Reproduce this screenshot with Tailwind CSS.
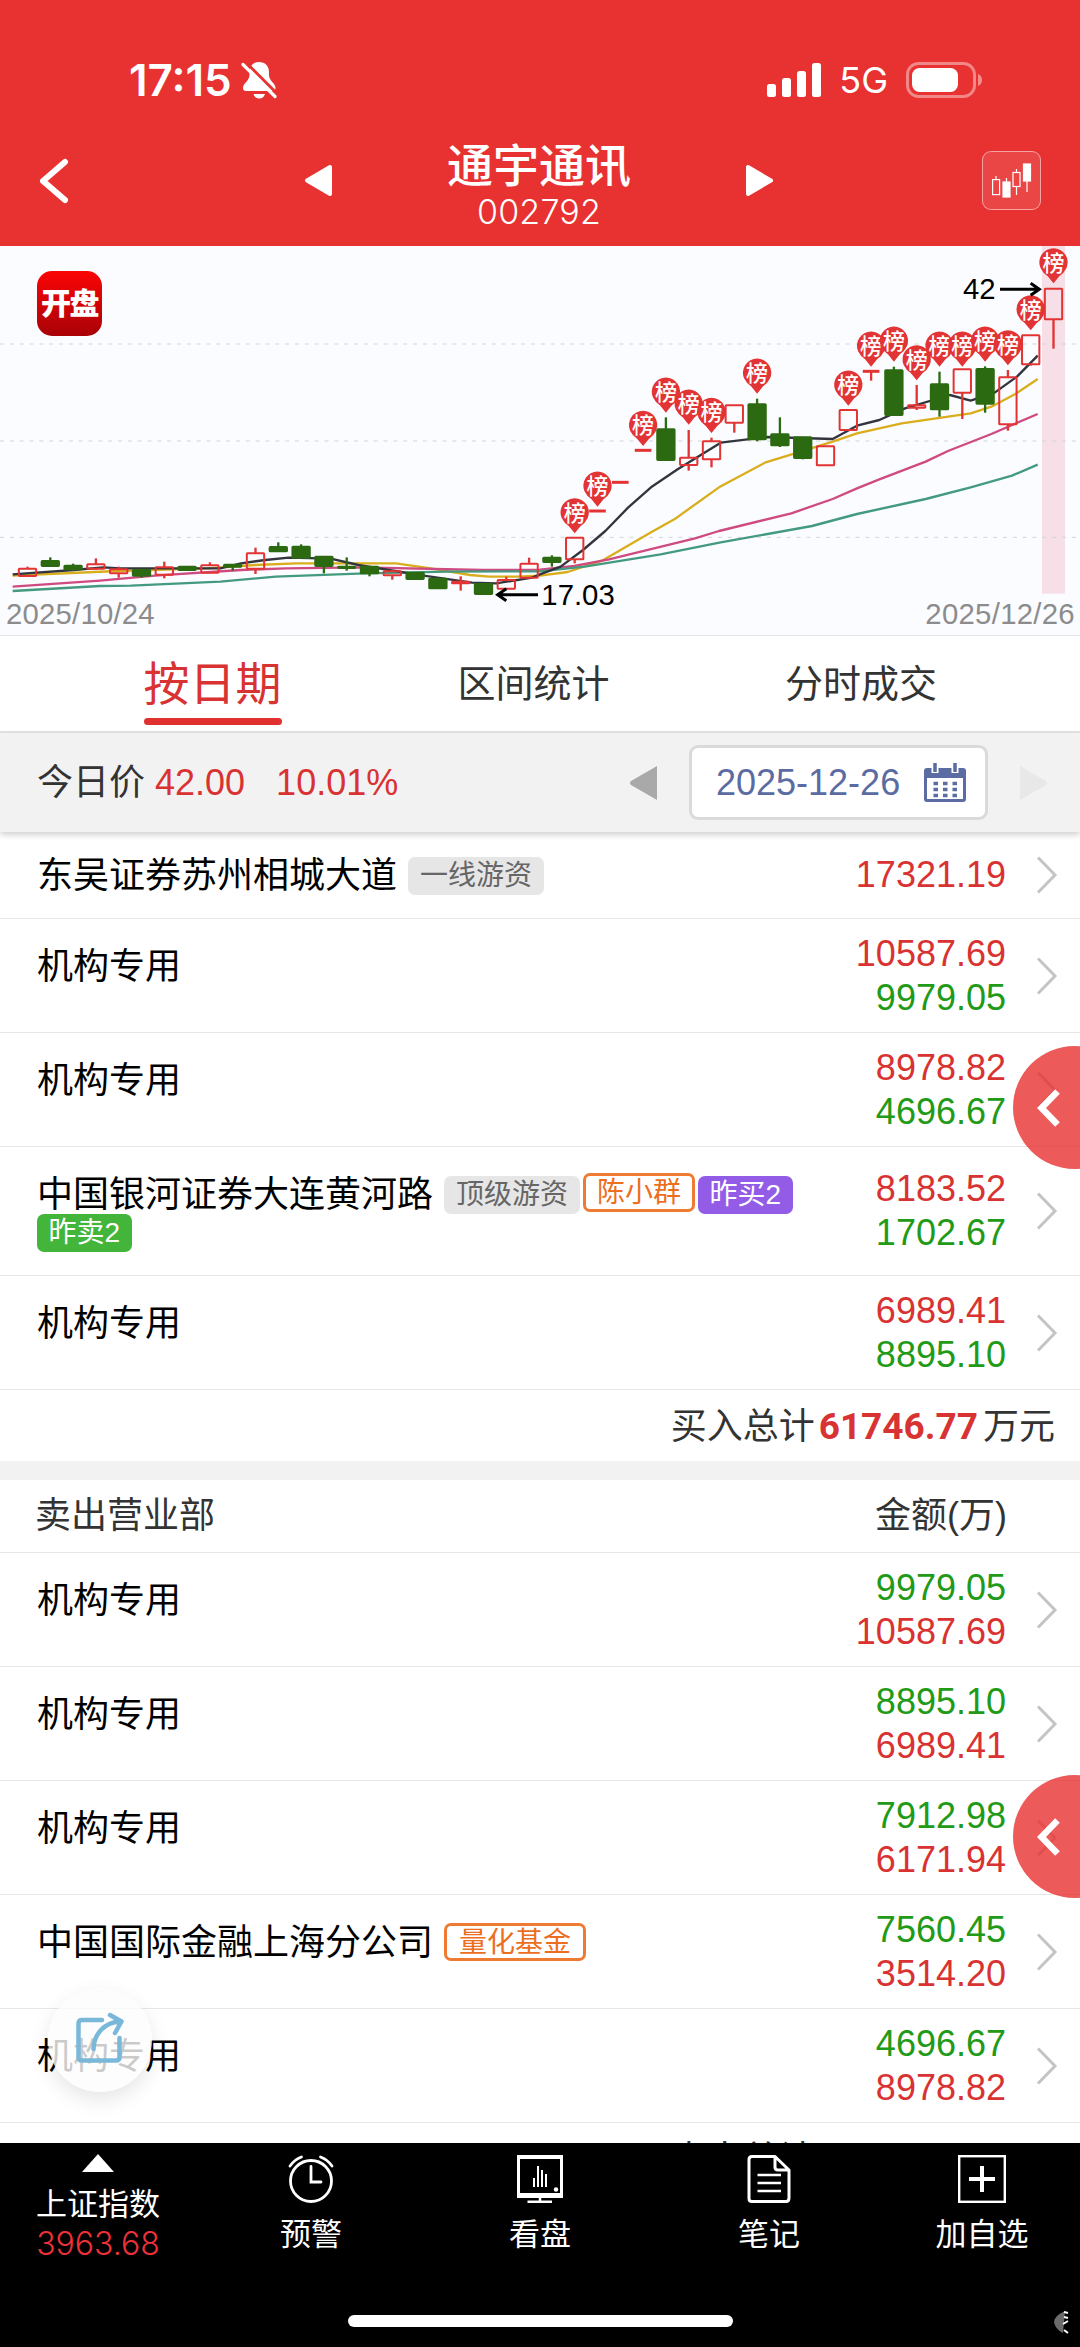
<!DOCTYPE html>
<html lang="zh-CN">
<head>
<meta charset="utf-8">
<title>通宇通讯 002792</title>
<script src="https://cdn.jsdelivr.net/npm/@tailwindcss/browser@4"></script>
</head>
<body class="bg-white">
<svg class="hidden">
  <symbol id="next" viewBox="0 0 22 38"><path d="M2 1.500 L19 19 L2 36.500" fill="none" stroke="#c4c4c4" stroke-width="3"/></symbol>
</svg>
<div class="relative flex h-[2347px] w-[1080px] flex-col overflow-hidden bg-white font-['Liberation_Sans','Noto_Sans_CJK_SC',sans-serif] text-[36px] leading-[44px] text-black">

  <!-- Status bar and title -->
  <header class="flex h-[246px] shrink-0 flex-col bg-[#e83131] text-white">
    <div class="flex h-[130px] items-start justify-between pt-[56px] pr-[97px] pl-[129px]">
      <div class="flex items-center gap-[9px]">
        <span class="font-['Inter',sans-serif] text-[44px] font-semibold leading-[48px]">17:15</span>
        <svg class="h-[38px] w-[36px]" viewBox="0 0 36 38">
          <path d="M18 1 C12 1 8.500 5 8.500 11 V14 C8.500 20 2 22 2 27 C2 29 3 30 5 30 H31 C33 30 34.500 29 34.500 27 C34.500 22 28 20 28 14 V11 C28 5 24 1 18 1Z M12.500 33 H24 C23 36 21 37.500 18.200 37.500 C15.500 37.500 13.500 36 12.500 33Z" fill="#fff"/>
          <path d="M4.500 1 L37 33.500" stroke="#e83131" stroke-width="3"/>
          <path d="M2 3.500 L34 35.500" stroke="#fff" stroke-width="3.200" stroke-linecap="round"/>
        </svg>
      </div>
      <div class="flex items-center gap-[18px] pt-[5px]">
        <svg class="h-[34px] w-[54px]" viewBox="0 0 54 34" fill="#fff"><rect x="0" y="21" width="9" height="13" rx="2.500"/><rect x="15" y="15" width="9" height="19" rx="2.500"/><rect x="30" y="8" width="9" height="26" rx="2.500"/><rect x="45" y="0" width="9" height="34" rx="2.500"/></svg>
        <span class="font-['Inter',sans-serif] text-[36px] leading-[38px]">5G</span>
        <svg class="h-[36px] w-[77px]" viewBox="0 0 77 36"><rect x="1.500" y="1.500" width="67" height="33" rx="11" fill="none" stroke="#fff" stroke-opacity=".42" stroke-width="3"/><rect x="6" y="6" width="46" height="24" rx="7.500" fill="#fff"/><path d="M72 12 C77.500 14 77.500 22 72 24Z" fill="#fff" fill-opacity=".45"/></svg>
      </div>
    </div>
    <div class="grid h-[98px] grid-cols-[1fr_470px_1fr] items-center pr-[39px] pl-[37px]">
      <svg class="h-[46px] w-[32px]" viewBox="0 0 32 46"><path d="M28 4 L6 23 L28 42" fill="none" stroke="#fff" stroke-width="6" stroke-linecap="round" stroke-linejoin="round"/></svg>
      <div class="flex items-center justify-between">
        <svg class="h-[33px] w-[28px]" viewBox="0 0 28 33"><path d="M26 3 V30 L3 16.500Z" fill="#fff" stroke="#fff" stroke-width="4" stroke-linejoin="round"/></svg>
        <div class="flex flex-col items-center pt-[9px]">
          <h1 class="text-[46px] font-medium leading-[54px]">通宇通讯</h1>
          <span class="font-['Inter',sans-serif] text-[34px] font-light leading-[38px] tracking-[0.2px]">002792</span>
        </div>
        <svg class="h-[33px] w-[28px]" viewBox="0 0 28 33"><path d="M2 3 V30 L25 16.500Z" fill="#fff" stroke="#fff" stroke-width="4" stroke-linejoin="round"/></svg>
      </div>
      <div class="size-[59px] justify-self-end rounded-[9px] border border-white/50 bg-white/10">
        <svg class="size-[57px]" viewBox="1 1 57 57" fill="none" stroke="#fff" stroke-width="1.200"><path d="M14 25 V28 M34.500 18 V21 M34.500 36 V44 M45 30 V41 M24.500 27 V31"/><rect x="10.600" y="28.600" width="7" height="15"/><rect x="21" y="31" width="7" height="15" fill="#fff"/><rect x="31" y="21.500" width="7" height="14"/><rect x="41.500" y="13" width="7" height="17" fill="#fff"/></svg>
      </div>
    </div>
  </header>

  <!-- Candlestick chart -->
  <section class="relative h-[390px] shrink-0 border-b border-[#e2e4e6] bg-[#fbfcff]">
    <svg id="chart" class="block h-[390px] w-[1080px]" viewBox="0 18 3240 1170"></svg>
    <div class="absolute top-[25px] left-[37px] flex size-[65px] items-center justify-center rounded-[15px] bg-linear-to-b from-[#fb0505] to-[#a90207] text-[30px] font-black leading-[64px] tracking-[-1.5px] text-white">开盘</div>
  </section>

  <!-- Tabs -->
  <nav class="flex h-[97px] shrink-0 border-b-2 border-[#e4e4e4] text-[38px] text-[#333]">
    <div class="flex w-[425px] flex-col items-center pt-[18px]">
      <span class="text-[46px] leading-[60px] text-[#d93232]">按日期</span>
      <i class="mt-[4px] h-[7px] w-[138px] rounded-full bg-[#e03030]"></i>
    </div>
    <div class="flex w-[217px] items-center justify-center">区间统计</div>
    <div class="flex w-[438px] items-center justify-center">分时成交</div>
  </nav>

  <!-- Price and date picker -->
  <section class="z-10 flex h-[99px] shrink-0 items-center bg-[#f2f2f2] pl-[37px] shadow-[0_3px_6px_rgba(0,0,0,0.18)]">
    <span class="pt-[1px] text-[#333]">今日价</span>
    <span class="pt-[1px] pl-[10px] text-[#d93232]">42.00</span>
    <span class="pt-[1px] pl-[31px] text-[#d93232]">10.01%</span>
    <svg class="ml-auto h-[34px] w-[28px]" viewBox="0 0 28 34"><path d="M28 0 V34 L2 19 Q0 17 2 15Z" fill="#a9a9a9"/></svg>
    <div class="mx-[32px] flex h-[75px] w-[299px] items-center justify-between rounded-[9px] border-[3px] border-[#dadada] bg-white pr-[18px] pl-[24px] text-[#5a6ca2]">
      <span>2025-12-26</span>
      <svg class="h-[40px] w-[44px]" viewBox="0 0 44 40">
        <path d="M4 5 H40 Q43 5 43 8 V36 Q43 39 40 39 H4 Q1 39 1 36 V8 Q1 5 4 5Z" fill="#5a6ca2"/>
        <path d="M4 15 H40 V36 H4Z" fill="#fff"/>
        <path d="M12 0 V10 M32 0 V10" stroke="#fff" stroke-width="7"/>
        <path d="M12 0 V9 M32 0 V9" stroke="#5a6ca2" stroke-width="3.500"/>
        <path d="M10.500 20.500 H34 M10.500 26.500 H34 M10.500 32.500 H34" stroke="#5a6ca2" stroke-width="3.600" stroke-dasharray="4.500 5"/>
      </svg>
    </div>
    <svg class="mr-[32px] h-[34px] w-[28px]" viewBox="0 0 28 34"><path d="M0 0 V34 L26 19 Q28 17 26 15Z" fill="#e8e8e8"/></svg>
  </section>

  <!-- Buy side -->
  <div class="flex h-[87px] shrink-0 items-center border-b border-[#e6e6e6] pr-[22px] pl-[37px]">
    <span class="pt-[2px]">东吴证券苏州相城大道</span>
    <span class="mt-[2px] ml-[11px] h-[38px] rounded-[7px] bg-[#e6e6e6] px-[12px] text-[28px] leading-[38px] text-[#666]">一线游资</span>
    <span class="-mt-[1px] ml-auto text-[#d93232]">17321.19</span>
    <svg class="ml-[30px] h-[38px] w-[22px]"><use href="#next"/></svg>
  </div>
  <div class="flex h-[114px] shrink-0 items-center border-b border-[#e6e6e6] pr-[22px] pl-[37px]">
    <span class="-mt-[18px] flex-1">机构专用</span>
    <div class="flex flex-col text-right"><span class="text-[#d93232]">10587.69</span><span class="text-[#219a18]">9979.05</span></div>
    <svg class="ml-[30px] h-[38px] w-[22px]"><use href="#next"/></svg>
  </div>
  <div class="flex h-[114px] shrink-0 items-center border-b border-[#e6e6e6] pr-[22px] pl-[37px]">
    <span class="-mt-[18px] flex-1">机构专用</span>
    <div class="flex flex-col text-right"><span class="text-[#d93232]">8978.82</span><span class="text-[#219a18]">4696.67</span></div>
    <svg class="ml-[30px] h-[38px] w-[22px]"><use href="#next"/></svg>
  </div>
  <div class="flex h-[129px] shrink-0 items-center border-b border-[#e6e6e6] pr-[22px] pl-[37px]">
    <div class="flex w-[780px] flex-wrap items-center pt-[5px]">
      <span class="leading-[38px]">中国银河证券大连黄河路</span>
      <span class="ml-[11px] h-[38px] rounded-[7px] bg-[#e6e6e6] px-[12px] text-[28px] leading-[38px] text-[#666]">顶级游资</span>
      <span class="-mt-[5px] ml-[3px] h-[39px] rounded-[7px] border-[3px] border-[#ef7a32] px-[11px] text-[28px] leading-[34px] text-[#ec6f1f]">陈小群</span>
      <span class="ml-[3px] h-[38px] rounded-[7px] bg-[#935ce6] px-[11.500px] text-[28px] leading-[38px] text-white">昨买2</span>
      <span class="h-[38px] rounded-[7px] bg-[#43b53a] px-[11.500px] text-[28px] leading-[38px] text-white">昨卖2</span>
    </div>
    <div class="ml-auto flex flex-col text-right"><span class="text-[#d93232]">8183.52</span><span class="text-[#219a18]">1702.67</span></div>
    <svg class="ml-[30px] h-[38px] w-[22px]"><use href="#next"/></svg>
  </div>
  <div class="flex h-[114px] shrink-0 items-center border-b border-[#e6e6e6] pr-[22px] pl-[37px]">
    <span class="-mt-[18px] flex-1">机构专用</span>
    <div class="flex flex-col text-right"><span class="text-[#d93232]">6989.41</span><span class="text-[#219a18]">8895.10</span></div>
    <svg class="ml-[30px] h-[38px] w-[22px]"><use href="#next"/></svg>
  </div>
  <div class="flex h-[71px] shrink-0 items-center justify-end pt-[2px] pr-[25px] text-[#333]">
    <span>买入总计</span><b class="mr-[5px] ml-[4px] font-['Roboto',sans-serif] text-[37px] font-bold text-[#d93232]">61746.77</b><span>万元</span>
  </div>
  <div class="h-[19px] shrink-0 bg-[#f2f2f2]"></div>

  <!-- Sell side -->
  <div class="flex h-[73px] shrink-0 items-center justify-between border-b border-[#e6e6e6] pr-[73px] pl-[35px] text-[#333]"><span>卖出营业部</span><span>金额(万)</span></div>
  <div class="flex h-[114px] shrink-0 items-center border-b border-[#e6e6e6] pr-[22px] pl-[37px]">
    <span class="-mt-[18px] flex-1">机构专用</span>
    <div class="flex flex-col text-right"><span class="text-[#219a18]">9979.05</span><span class="text-[#d93232]">10587.69</span></div>
    <svg class="ml-[30px] h-[38px] w-[22px]"><use href="#next"/></svg>
  </div>
  <div class="flex h-[114px] shrink-0 items-center border-b border-[#e6e6e6] pr-[22px] pl-[37px]">
    <span class="-mt-[18px] flex-1">机构专用</span>
    <div class="flex flex-col text-right"><span class="text-[#219a18]">8895.10</span><span class="text-[#d93232]">6989.41</span></div>
    <svg class="ml-[30px] h-[38px] w-[22px]"><use href="#next"/></svg>
  </div>
  <div class="flex h-[114px] shrink-0 items-center border-b border-[#e6e6e6] pr-[22px] pl-[37px]">
    <span class="-mt-[18px] flex-1">机构专用</span>
    <div class="flex flex-col text-right"><span class="text-[#219a18]">7912.98</span><span class="text-[#d93232]">6171.94</span></div>
    <svg class="ml-[30px] h-[38px] w-[22px]"><use href="#next"/></svg>
  </div>
  <div class="flex h-[114px] shrink-0 items-center border-b border-[#e6e6e6] pr-[22px] pl-[37px]">
    <div class="-mt-[18px] flex flex-1 items-center">
      <span>中国国际金融上海分公司</span>
      <span class="-mt-[2px] ml-[11px] h-[38px] rounded-[7px] border-[3px] border-[#ef7a32] px-[12px] text-[28px] leading-[34px] text-[#ec6f1f]">量化基金</span>
    </div>
    <div class="flex flex-col text-right"><span class="text-[#219a18]">7560.45</span><span class="text-[#d93232]">3514.20</span></div>
    <svg class="ml-[30px] h-[38px] w-[22px]"><use href="#next"/></svg>
  </div>
  <div class="flex h-[114px] shrink-0 items-center border-b border-[#e6e6e6] pr-[22px] pl-[37px]">
    <span class="-mt-[18px] flex-1">机构专用</span>
    <div class="flex flex-col text-right"><span class="text-[#219a18]">4696.67</span><span class="text-[#d93232]">8978.82</span></div>
    <svg class="ml-[30px] h-[38px] w-[22px]"><use href="#next"/></svg>
  </div>
  <div class="flex h-[20px] shrink-0 items-start justify-end overflow-hidden pt-[15px] pr-[25px] text-[#333]">
    <span>卖出总计</span><b class="mr-[5px] ml-[4px] font-['Roboto',sans-serif] text-[37px] font-bold text-[#219a18]">39044.25</b><span>万元</span>
  </div>

  <!-- Bottom toolbar -->
  <footer class="relative flex h-[204px] shrink-0 bg-black text-[31px] leading-[40px] text-white">
    <div class="flex w-[196px] flex-col items-center pt-[11px]">
      <svg class="h-[18px] w-[32px]" viewBox="0 0 32 18"><path d="M16 0 L32 18 H0Z" fill="#fff"/></svg>
      <span class="mt-[13px]">上证指数</span>
      <span class="-mt-[1px] font-['Inter',sans-serif] text-[32px] font-light text-[#ee3137]">3963.68</span>
    </div>
    <div class="flex w-[230px] flex-col items-center pt-[12px]">
      <svg class="h-[48px] w-[46px]" viewBox="0 0 46 48" fill="none" stroke="#fff" stroke-width="2.800" stroke-linecap="round"><circle cx="23" cy="26" r="20.500"/><path d="M23 11.500 V27 H33 M2 11 Q6.500 4.500 13.500 2 M44 11 Q39.500 4.500 32.500 2"/></svg>
      <span class="mt-[12px]">预警</span>
    </div>
    <div class="flex w-[228px] flex-col items-center pt-[12px]">
      <svg class="h-[48px] w-[46px]" viewBox="0 0 46 48"><path d="M0 0 H46 V43 H0Z M3 4 V38 H43 V4Z" fill="#fff" fill-rule="evenodd"/><path d="M23 43 V47 M10.500 46.700 H35" stroke="#fff" stroke-width="2.500"/><path d="M17 23 V32 M21 11 V32 M25 15 V32 M29 19 V32" stroke="#fff" stroke-width="2"/><circle cx="39" cy="34.500" r="2.200" fill="#fff"/></svg>
      <span class="mt-[12px]">看盘</span>
    </div>
    <div class="flex w-[230px] flex-col items-center pt-[12px]">
      <svg class="h-[48px] w-[44px]" viewBox="0 0 44 48" fill="none" stroke="#fff" stroke-width="3" stroke-linejoin="round"><path d="M5 1.500 H28 L42 15 V43 Q42 46.500 39 46.500 H5 Q2 46.500 2 43.500 V4.500 Q2 1.500 5 1.500Z M28 2 V12 Q28 15 31 15 H42"/><path d="M10.500 20 H34 M10.500 28 H34 M10.500 36 H34" stroke-width="2.600"/></svg>
      <span class="mt-[12px]">笔记</span>
    </div>
    <div class="flex w-[196px] flex-col items-center pt-[12px]">
      <svg class="h-[48px] w-[48px]" viewBox="0 0 48 48"><rect x="1.200" y="1.200" width="45.600" height="45.600" fill="none" stroke="#fff" stroke-width="2.400"/><path d="M24 11 V37 M11 24 H37" stroke="#fff" stroke-width="4"/></svg>
      <span class="mt-[12px]">加自选</span>
    </div>
    <div class="absolute top-[172px] left-[348px] h-[12px] w-[385px] rounded-full bg-white"></div>
    <svg class="absolute top-[167px] left-[1052px] h-[24px] w-[18px]" viewBox="0 0 18 24"><path d="M13 1 Q2 6 2 12 Q3 19 11 23Z" fill="#6b6b6b"/><path d="M12 2 L16 3 M12 7 L16 8 M11 14 L16 11 M12 20 L16 23" stroke="#fff" stroke-width="2"/></svg>
  </footer>

  <!-- Floating buttons -->
  <div class="absolute top-[1046px] left-[1013px] z-20 flex size-[123px] items-center rounded-full bg-[#e83131]/80 pl-[24px]">
    <svg class="h-[38px] w-[26px]" viewBox="0 0 26 38"><path d="M20.500 2.500 L4.500 19 L20.500 35.500" fill="none" stroke="#fff" stroke-width="6.500"/></svg>
  </div>
  <div class="absolute top-[1775px] left-[1013px] z-20 flex size-[123px] items-center rounded-full bg-[#e83131]/80 pl-[24px]">
    <svg class="h-[38px] w-[26px]" viewBox="0 0 26 38"><path d="M20.500 2.500 L4.500 19 L20.500 35.500" fill="none" stroke="#fff" stroke-width="6.500"/></svg>
  </div>
  <div class="absolute top-[1988px] left-[48px] z-20 flex size-[104px] items-center justify-center rounded-full bg-[#fcfcfc]/80 pb-[4px] shadow-[0_8px_20px_rgba(0,0,0,0.1)]">
    <svg class="h-[52px] w-[48px]" viewBox="0 0 48 52" fill="none" stroke="#7ab8da" stroke-width="4.500" stroke-linecap="round" stroke-linejoin="round"><path d="M26 8 H6 Q2.500 8 2.500 11.500 V45 Q2.500 48.500 6 48.500 H40 Q43.500 48.500 43.500 45 V26 M17.500 37 C18 22 28 10.500 44 9.500 M34 3 L45.500 9.500 L39 21"/></svg>
  </div>
</div>

<script>
  // Chart units: three per CSS pixel, one slot per trading day.
  const RED = '#e23434', GREEN = '#2c6a12';
  const slot = i => 82.500 + 68.400 * i;
  // [up or down, body top, body bottom, high, low]
  const days = [
    ['u',986,1008,980,1008],['d',963,978,952,978],['d',977,988,971,992],['u',973,986,955,990],['u',988,1000,980,1013],
    ['d',990,1007,986,1013],['u',982,1004,965,1015],['d',980,990,978,993],['u',976,998,967,998],['d',974,980,972,992],
    ['u',940,986,923,1002],['d',921,934,907,936],['d',920,953,913,953],['d',950,978,948,1000],['d',980,984,952,992],
    ['d',980,1000,978,1009],['u',994,1006,990,1019],['d',998,1017,996,1019],['d',1016,1045,1014,1047],['u',1025,1030,1009,1052],
    ['d',1032,1062,1030,1063],['u',1020,1046,1010,1046],['u',971,1013,953,1015],['d',953,966,946,980],['u',893,958,893,970],
    ['u',813,813,813,813],['u',727,727,727,727],['u',631,631,631,631],['d',568,660,532,660],['u',653,675,570,692],
    ['u',604,658,593,682],['u',496,548,496,578],['d',493,598,476,604],['d',583,616,532,621],['d',592,654,592,658],
    ['u',619,676,619,676],['u',510,570,510,572],['u',394,394,394,422],['d',391,525,380,525],['u',496,503,435,510],
    ['d',433,508,395,530],['u',388,458,388,537],['d',387,491,379,518],['u',412,553,390,572],['u',286,373,286,377],['u',146,238,146,326]];
  const pins = {24:817,25:737,27:555,28:455,29:491,30:516,32:398,36:434,37:317,38:302,39:358,40:317,41:317,42:302,43:313,44:208,45:67};
  const averages = {
    '#32353d': '38,1003 222,990 310,982 362,985 661,985 723,970 796,960 866,953 992,956 1075,975 1271,1007 1416,1028 1488,1030 1596,1013 1620,1003 1682,980 1749,930 1816,873 1884,803 1953,742 2033,688 2162,608 2302,591 2498,597 2571,557 2638,540 2715,505 2850,465 2912,482 2984,458 3051,410 3113,347',
    '#d9ad1c': '38,1007 351,993 620,985 765,975 889,970 1188,970 1292,985 1410,1005 1467,1010 1550,1010 1620,1007 1703,996 1806,962 1956,875 2023,838 2157,742 2297,667 2385,640 2498,605 2571,580 2705,550 2912,520 2974,500 3046,462 3113,417',
    '#cf4a80': '38,1040 300,1022 465,1007 723,990 858,985 1085,982 1447,990 1620,989 1723,978 1827,958 2085,895 2157,873 2374,820 2498,777 2571,745 2638,718 2777,665 2844,633 2974,582 3113,522',
    '#439a7f': '38,1053 300,1038 393,1037 661,1025 827,1010 1095,1000 1343,995 1620,994 1754,980 1982,943 2162,907 2436,858 2571,822 2777,777 2912,742 3036,707 3113,674'
  };
  let s = '<rect x="3126" y="18" width="69" height="1043" fill="#f6dfe6"/>';
  for (const y of [312, 603, 892]) s += `<path d="M0 ${y}H3240" stroke="#d3d4d8" stroke-width="3" stroke-dasharray="12 17.500"/>`;
  const line = (c, p, w) => `<polyline points="${p}" fill="none" stroke="${c}" stroke-width="${w}" stroke-linejoin="round"/>`;
  for (const c in averages) if (c !== '#32353d') s += line(c, averages[c], 7);
  s += line('#32353d', averages['#32353d'], 7);
  days.forEach(([t, a, b, h, l], i) => {
    const x = slot(i), c = t === 'u' ? RED : GREEN;
    if (h < a) s += `<path d="M${x} ${h}V${a}" stroke="${c}" stroke-width="7"/>`;
    if (l > b) s += `<path d="M${x} ${b}V${l}" stroke="${c}" stroke-width="7"/>`;
    if (a === b) s += `<path d="M${x - 25} ${a}H${x + 25}" stroke="${c}" stroke-width="9"/>`;
    else s += `<rect x="${x - 26}" y="${a}" width="52" height="${b - a}" rx="2" fill="${t === 'u' ? 'none' : c}" stroke="${c}" stroke-width="6"/>`;
  });
  for (const i in pins) {
    const x = slot(+i), y = pins[i];
    s += `<path d="M${x - 39} ${y + 17}A42.500 42.500 0 1 1 ${x + 39} ${y + 17}Q${x + 32} ${y + 32} ${x + 18} ${y + 41}L${x} ${y + 63}L${x - 18} ${y + 41}Q${x - 32} ${y + 32} ${x - 39} ${y + 17}Z" fill="#e23434"/>`;
    s += `<text x="${x}" y="${y + 25}" font-size="66" font-weight="500" text-anchor="middle" fill="#fff">榜</text>`;
  }
  s += '<g fill="none" stroke="#000" stroke-width="9"><path d="M3000 148H3115M3092 130L3118 148L3092 166"/><path d="M1614 1064H1496M1519 1046L1493 1064L1519 1082"/></g>';
  s += '<g font-size="88"><text x="2889" y="178">42</text><text x="1624" y="1095">17.03</text><g fill="#8c8c8c"><text x="18" y="1152" textLength="446">2025/10/24</text><text x="2776" y="1152" textLength="448">2025/12/26</text></g></g>';
  document.getElementById('chart').innerHTML = s;
</script>
</body>
</html>
